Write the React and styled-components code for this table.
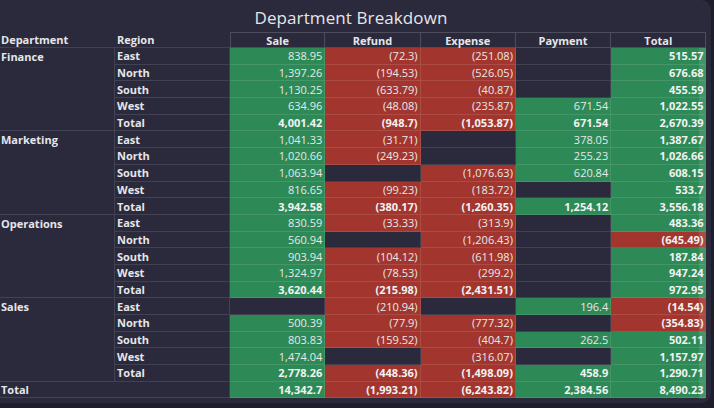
import React from "react";
import styled, { createGlobalStyle } from "styled-components";

const Global = createGlobalStyle`
  html, body { margin: 0; padding: 0; background: #1e1e2b; overflow: hidden; }
  body { font-family: "Open Sans", "Noto Sans", sans-serif; color: #e6e6e9; }
`;

const Card = styled.div`
  position: relative;
  margin-left: -10px;
  width: 721px;
  height: 403px;
  box-sizing: border-box;
  padding-left: 10px;
  background: #2a2a3c;
  border-radius: 10px;
  overflow: hidden;
`;

const Title = styled.div`
  width: 702px;
  height: 32px;
  display: flex;
  align-items: center;
  justify-content: center;
  font-size: 17px;
  font-weight: 400;
  letter-spacing: 0.1px;
  color: #e6e6ea;
  padding-top: 2px;
  box-sizing: border-box;
`;

const Grid = styled.div`
  display: grid;
  grid-template-columns: 115px 115px repeat(5, 95.3px);
  grid-template-rows: 16px;
  grid-auto-rows: 16.7px;
  font-size: 11px;
  line-height: 1;
`;

const line = "rgba(255,255,255,0.11)";

const HeadLabel = styled.div`
  display: flex;
  align-items: center;
  padding-left: ${(p) => p.$pad}px;
  font-weight: 700;
  border-bottom: 1px solid ${line};
  box-sizing: border-box;
`;

const HeadValue = styled.div`
  display: flex;
  align-items: center;
  justify-content: center;
  font-weight: 700;
  border: 1px solid rgba(255,255,255,0.16);
  border-left-width: ${(p) => (p.$first ? 1 : 0)}px;
  box-sizing: border-box;
`;

const DeptCell = styled.div`
  grid-row: span 5;
  padding: 3px 0 0 1px;
  font-weight: 700;
  border-right: 1px solid ${line};
  border-bottom: 1px solid ${line};
  box-sizing: border-box;
`;

const RegionCell = styled.div`
  display: flex;
  align-items: center;
  padding-left: 2px;
  font-weight: 700;
  border-right: 1px solid ${line};
  border-bottom: 1px solid ${line};
  box-sizing: border-box;
`;

const GrandLabel = styled(RegionCell)`
  grid-column: span 2;
  padding-left: 1px;
`;

const fills = { pos: "#2d8a57", neg: "#a2362e", none: "transparent" };

const ValueCell = styled.div`
  display: flex;
  align-items: center;
  justify-content: flex-end;
  padding-right: 2px;
  background: ${(p) => fills[p.$kind]};
  font-weight: ${(p) => (p.$bold ? 700 : 400)};
  color: ${(p) => (p.$bold ? "#f2f2f2" : "#e8e8ea")};
  border-right: 1px solid ${line};
  border-bottom: 1px solid ${line};
  box-sizing: border-box;
`;

const ScrollThumb = styled.div`
  position: absolute;
  left: 709px;
  top: 48px;
  width: 6px;
  height: 351px;
  background: rgba(255, 255, 255, 0.1);
  pointer-events: none;
`;

const data = [
  ["Finance", [
    ["East", "838.95", "(72.3)", "(251.08)", "", "515.57"],
    ["North", "1,397.26", "(194.53)", "(526.05)", "", "676.68"],
    ["South", "1,130.25", "(633.79)", "(40.87)", "", "455.59"],
    ["West", "634.96", "(48.08)", "(235.87)", "671.54", "1,022.55"],
    ["Total", "4,001.42", "(948.7)", "(1,053.87)", "671.54", "2,670.39"],
  ]],
  ["Marketing", [
    ["East", "1,041.33", "(31.71)", "", "378.05", "1,387.67"],
    ["North", "1,020.66", "(249.23)", "", "255.23", "1,026.66"],
    ["South", "1,063.94", "", "(1,076.63)", "620.84", "608.15"],
    ["West", "816.65", "(99.23)", "(183.72)", "", "533.7"],
    ["Total", "3,942.58", "(380.17)", "(1,260.35)", "1,254.12", "3,556.18"],
  ]],
  ["Operations", [
    ["East", "830.59", "(33.33)", "(313.9)", "", "483.36"],
    ["North", "560.94", "", "(1,206.43)", "", "(645.49)"],
    ["South", "903.94", "(104.12)", "(611.98)", "", "187.84"],
    ["West", "1,324.97", "(78.53)", "(299.2)", "", "947.24"],
    ["Total", "3,620.44", "(215.98)", "(2,431.51)", "", "972.95"],
  ]],
  ["Sales", [
    ["East", "", "(210.94)", "", "196.4", "(14.54)"],
    ["North", "500.39", "(77.9)", "(777.32)", "", "(354.83)"],
    ["South", "803.83", "(159.52)", "(404.7)", "262.5", "502.11"],
    ["West", "1,474.04", "", "(316.07)", "", "1,157.97"],
    ["Total", "2,778.26", "(448.36)", "(1,498.09)", "458.9", "1,290.71"],
  ]],
];

const grand = ["14,342.7", "(1,993.21)", "(6,243.82)", "2,384.56", "8,490.23"];
const heads = ["Sale", "Refund", "Expense", "Payment", "Total"];

const kindOf = (v) => (v === "" ? "none" : v.startsWith("(") ? "neg" : "pos");

function Values({ values, bold }) {
  return values.map((v, i) => (
    <ValueCell key={i} $kind={kindOf(v)} $bold={bold || i === 4}>
      {v}
    </ValueCell>
  ));
}

export default function App() {
  return (
    <>
      <Global />
      <Card>
        <Title>Department Breakdown</Title>
        <Grid>
          <HeadLabel $pad={1}>Department</HeadLabel>
          <HeadLabel $pad={2}>Region</HeadLabel>
          {heads.map((h, i) => (
            <HeadValue key={h} $first={i === 0}>{h}</HeadValue>
          ))}
          {data.map(([dept, rows]) => (
            <React.Fragment key={dept}>
              <DeptCell>{dept}</DeptCell>
              {rows.map(([region, ...vals]) => (
                <React.Fragment key={region}>
                  <RegionCell>{region}</RegionCell>
                  <Values values={vals} bold={region === "Total"} />
                </React.Fragment>
              ))}
            </React.Fragment>
          ))}
          <GrandLabel>Total</GrandLabel>
          <Values values={grand} bold />
        </Grid>
        <ScrollThumb />
      </Card>
    </>
  );
}
